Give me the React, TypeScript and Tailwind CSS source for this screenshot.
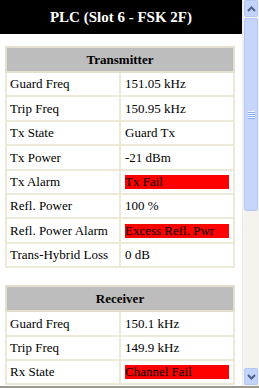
import React from 'react';

type Row = { label: string; value: string; alarm?: boolean };

const transmitter: Row[] = [
  { label: 'Guard Freq', value: '151.05 kHz' },
  { label: 'Trip Freq', value: '150.95 kHz' },
  { label: 'Tx State', value: 'Guard Tx' },
  { label: 'Tx Power', value: '-21 dBm' },
  { label: 'Tx Alarm', value: 'Tx Fail', alarm: true },
  { label: 'Refl. Power', value: '100 %' },
  { label: 'Refl. Power Alarm', value: 'Excess Refl. Pwr', alarm: true },
  { label: 'Trans-Hybrid Loss', value: '0 dB' },
];

const receiver: Row[] = [
  { label: 'Guard Freq', value: '150.1 kHz' },
  { label: 'Trip Freq', value: '149.9 kHz' },
  { label: 'Rx State', value: 'Channel Fail', alarm: true },
];

const StatusTable = ({ title, rows }: { title: string; rows: Row[] }) => (
  <table className="w-[230px] ml-[5px] border-collapse border-2 border-[#e4e0cf] table-fixed">
    <thead>
      <tr>
        <th
          colSpan={2}
          className="h-[25px] bg-[#bdbdbd] border-2 border-[#e4e0cf] text-[13px] font-bold text-black text-center p-0"
        >
          {title}
        </th>
      </tr>
    </thead>
    <tbody>
      {rows.map((r) => (
        <tr key={r.label} className="h-[24.4px]">
          <td className="w-[114px] border-2 border-[#ece9d8] px-[3px] py-0 text-[13px] text-black whitespace-nowrap">
            {r.label}
          </td>
          <td className="border-2 border-[#ece9d8] px-[4px] py-0 text-[13px] text-black whitespace-nowrap">
            {r.alarm ? (
              <div className="bg-[#ff0000] h-[14px] leading-[14px]">{r.value}</div>
            ) : (
              r.value
            )}
          </td>
        </tr>
      ))}
    </tbody>
  </table>
);

const Chevron = ({ up }: { up?: boolean }) => (
  <svg width="9" height="6" viewBox="0 0 9 6">
    <path
      d={up ? 'M1 5 L4.5 1.5 L8 5' : 'M1 1 L4.5 4.5 L8 1'}
      fill="none"
      stroke="#4d6185"
      strokeWidth="2"
    />
  </svg>
);

const Scrollbar = () => (
  <div className="w-[17px] h-full flex flex-col bg-[#f4f3ee] border-l border-[#eeede5]">
    <div className="h-[17px] mx-[1px] mt-0 rounded-[2px] border border-[#b4c7f1] bg-[#c3d3fd] flex items-center justify-center">
      <Chevron up />
    </div>
    <div className="mt-[1px] h-[193px] mx-[1px] rounded-[2px] border border-[#b4c7f1] bg-[#c5d5fc] flex flex-col items-center justify-center gap-[1px]">
      {[0, 1, 2, 3].map((i) => (
        <div key={i} className="w-[7px] h-[1px] bg-[#eef4fe] shadow-[0_1px_0_#8cb0f8]" />
      ))}
    </div>
    <div className="flex-1" />
    <div className="h-[17px] mx-[1px] mb-[1px] rounded-[2px] border border-[#b4c7f1] bg-[#c3d3fd] flex items-center justify-center">
      <Chevron />
    </div>
  </div>
);

export default function App() {
  return (
    <div
      className="w-[259px] h-[388px] overflow-hidden flex flex-col bg-white"
      style={{ fontFamily: '"Liberation Serif", "Times New Roman", serif' }}
    >
      <div className="flex h-[386px]">
        <div className="w-[242px] overflow-hidden">
          <div className="h-[34px] bg-black text-white text-[15px] font-bold flex items-center justify-center">
            PLC (Slot 6 - FSK 2F)
          </div>
          <div className="pt-[12px]">
            <StatusTable title="Transmitter" rows={transmitter} />
          </div>
          <div className="pt-[17px]">
            <StatusTable title="Receiver" rows={receiver} />
          </div>
        </div>
        <Scrollbar />
      </div>
      <div className="h-[2px] bg-[#9c9a8f]" />
    </div>
  );
}
